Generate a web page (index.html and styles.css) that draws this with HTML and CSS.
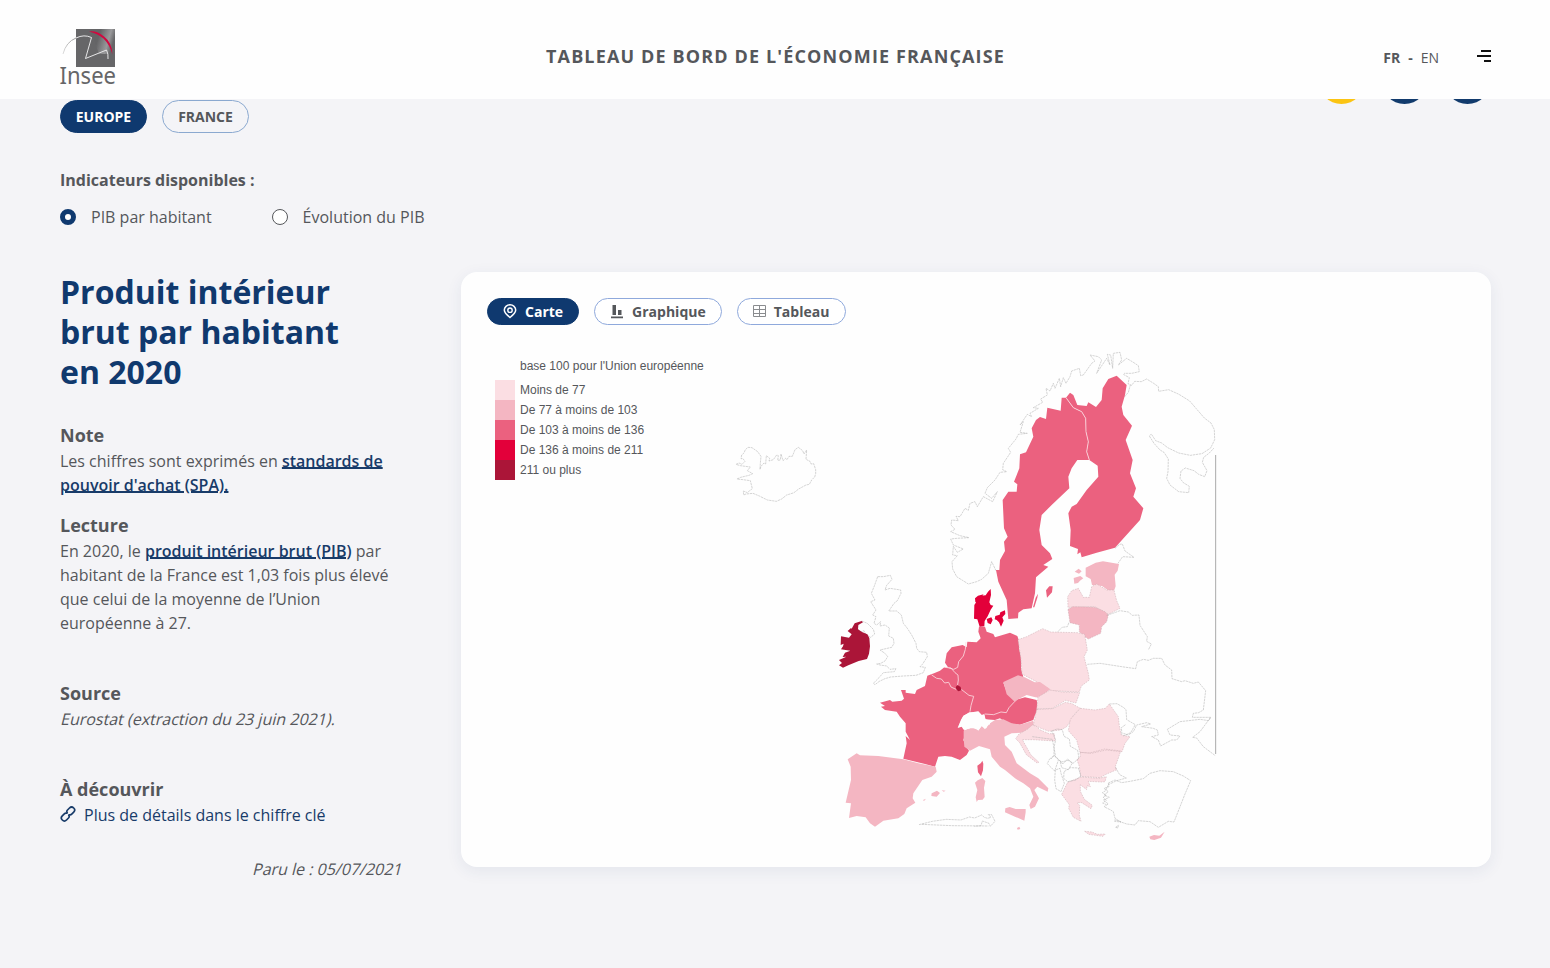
FILE: index.html
```html
<!DOCTYPE html>
<html lang="fr">
<head>
<meta charset="utf-8">
<title>Tableau de bord de l'économie française</title>
<link rel="stylesheet" href="styles.css">
</head>
<body>
<header class="header">
  <svg class="logo" width="60" height="62" viewBox="59 28 60 62" role="img" aria-label="Insee">
    <defs>
      <linearGradient id="shade" x1="0" y1="0" x2="1" y2="0.3"><stop offset="0.4" stop-color="#646466"/><stop offset="0.8" stop-color="#99999b"/><stop offset="1" stop-color="#666668"/></linearGradient>
      <linearGradient id="fade" x1="0" y1="1" x2="1" y2="0"><stop offset="0" stop-color="#ddd"/><stop offset="1" stop-color="#999"/></linearGradient>
    </defs>
    <path fill="#666668" d="M76 29h39v38H76z"/>
    <path fill="url(#shade)" d="M90 29h25v25H99z"/>
    <path fill="none" stroke="url(#fade)" d="M63 54q3-12 13-16"/>
    <path fill="none" stroke="#f4f4f5" stroke-width=".9" d="M76 38q8-4 15.500-.5L85.500 58.500l21-8.500q2 4 1.500 9"/>
    <path fill="#d3073f" d="M89 31.500q8-1 15 5 8 6 8.500 18-3-10-9-16-6-5-14.500-7"/>
    <text class="logo-text" x="59.500" y="83.500" textLength="56.500" lengthAdjust="spacingAndGlyphs">Insee</text>
  </svg>
  <h1 class="site-title">Tableau de bord de l'économie française</h1>
  <nav class="nav">
    <span class="lang"><b>FR</b><b class="dash">-</b><span>EN</span></span>
    <svg width="14" height="12" viewBox="0 0 14 12"><path d="M4 1h10M0 6h14M7 11h7" stroke="#111" stroke-width="1.800"/></svg>
  </nav>
</header>
<main class="main">
  <div class="top">
    <div class="pills"><button class="pill active">EUROPE</button><button class="pill">FRANCE</button></div>
    <div class="tools"><i class="tool yellow"></i><i class="tool"></i><i class="tool"></i></div>
  </div>
  <section class="indicators">
    <strong>Indicateurs disponibles :</strong>
    <div class="radios">
      <label class="radio"><i class="dot checked"></i>PIB par habitant</label>
      <label class="radio"><i class="dot"></i>Évolution du PIB</label>
    </div>
  </section>
  <div class="content">
    <aside class="aside">
      <h2>Produit intérieur<br>brut par habitant<br>en 2020</h2>
      <section><h3>Note</h3><p>Les chiffres sont exprimés en <a class="def">standards de<br>pouvoir d'achat (SPA).</a></p></section>
      <section class="close"><h3>Lecture</h3><p>En 2020, le <a class="def">produit intérieur brut (PIB)</a> par<br>habitant de la France est 1,03 fois plus élevé<br>que celui de la moyenne de l’Union<br>européenne à 27.</p></section>
      <section class="apart"><h3>Source</h3><p><em>Eurostat (extraction du 23 juin 2021).</em></p></section>
      <section class="apart"><h3>À découvrir</h3>
        <a class="more"><svg width="16" height="16" viewBox="0 0 16 16" fill="none" stroke="#183b69" stroke-width="1.700" stroke-linecap="round"><path d="M7.200 6.800q-1-1.500.3-2.800l2-2a2.900 2.900 0 0 1 4.200 4.200l-2 2q-1 1-2.200.6"/><path d="M8.800 9.200q1 1.500-.3 2.800l-2 2a2.900 2.900 0 0 1-4.200-4.200l2-2q1-1 2.200-.6"/></svg>Plus de détails dans le chiffre clé</a>
      </section>
      <p class="date"><em>Paru le : 05/07/2021</em></p>
    </aside>
    <article class="card">
      <div class="tabs">
        <button class="tab active"><svg width="14" height="16" viewBox="0 0 14 16" fill="none" stroke="#fff"><path stroke-width="1.500" d="M7 13.500Q1.300 9 1.300 6a5.700 5.200 0 0 1 11.400 0Q12.700 9 7 13.500z"/><circle cx="7" cy="6.200" r="2.200" stroke-width="1.400"/></svg>Carte</button>
        <button class="tab chart"><svg width="12" height="14" viewBox="0 0 12 14" fill="#55575b"><path d="M1.500 0h3.500v10H1.500zM7 5h3.500v5H7zM0 11.500h12v1.700H0z"/></svg>Graphique</button>
        <button class="tab table"><svg width="13" height="14" viewBox="0 0 13 14" fill="none" stroke="#8a8c8f"><path d="M.5.500h12v11H.5zM6.500.500v11M.5 4.500h12M.5 8.500h12"/></svg>Tableau</button>
      </div>
      <svg class="map" width="978" height="505" viewBox="487 340 978 505">
        <g class="legend">
          <text x="520" y="370">base 100 pour l'Union européenne</text>
          <path class="c1" d="M495 380h20v20h-20z"/><text x="520" y="394">Moins de 77</text>
          <path class="c2" d="M495 400h20v20h-20z"/><text x="520" y="414">De 77 à moins de 103</text>
          <path class="c3" d="M495 420h20v20h-20z"/><text x="520" y="434">De 103 à moins de 136</text>
          <path class="c4" d="M495 440h20v20h-20z"/><text x="520" y="454">De 136 à moins de 211</text>
          <path class="c5" d="M495 460h20v20h-20z"/><text x="520" y="474">211 ou plus</text>
        </g>
        <!-- Islande -->
        <g transform="translate(725 435) scale(.33333)">
          <path class="out" d="M105 103l3-9 9-10 5 3 2-25 10 8-2 8 13-4 10-14 5 2-2 14 8-1 2-18 6 20 8-7 4 4 6-10 10 0 8-20 10-7 13 10 4 10 8-12-2 28 12 6 3 8 8-1 6 18 0 12-3 10-9 9-7 13-10 2-22 12-14 11-12 4-10 3-15 12-16 7-27-4-24-12-19-8-21 2-7 3-1-12 12 5 7-6 8-6-6-24-22-3-18-2 11-5 25-6 11-5-16-9 9-11-30-4-13-4 9-4 9 4 9-9-6-8-6 0 2-11 7-6 4-10 8-7 12 1 17 12 10 14-2 20z"/>
        </g>
        <!-- Scandinavie -->
        <g transform="translate(940 345) scale(.33333)">
          <path class="out" d="M168 677L155 650 145 685 125 703 110 710 85 717 50 695 38 672 36 650 52 632 38 630 40 604 52 622 70 612 40 600 32 582 50 580 87 578 60 572 32 560 45 553 33 540 35 525 55 527 48 514 60 515 75 490 85 496 90 475 105 470 112 485 130 455 158 470 172 440 155 460 135 445 142 428 165 405 180 382 200 380 188 374 190 355 212 322 205 310 228 282 235 268 262 265 240 262 250 230 240 240 262 208 275 215 270 205 295 190 280 188 308 172 302 162 322 150 318 130 330 138 340 115 345 130 358 100 362 125 370 98 378 115 390 95 395 78 418 70 422 92 430 90 455 55 465 48 450 30 475 35 485 45 470 85 500 40 510 60 502 28 512 30 518 70 520 25 540 22 545 45 535 60 560 40 580 52 595 62 598 80 575 85 552 85"/>
          <path class="out" d="M550 88l18 10-4 18 11 5 9-12 20 1 16-8 21 13 14 10 1 14 30-5 31 14 32 20 19 22 25 29 20 15 10 20 1 30-12 25-26 17-35 5-35-7-33-16-18-14-18-7-13-20-6 6 14 22 18 20 12 7 13 20-1 38-4 20 10 20 26 20 30 3 2-19-18-11-10-13 3-22 13-9 26 8 14 11 18 7 7-18-14-25 4-15 17-13 14-15M553 156l12-14 6-22M525 610l14-12 8-1 8 21 27 19-34-2-14 20"/>
          <path class="edge" d="M827 330v897"/>
          <path class="c3" d="M378 158L365 158 362 197 322 188 318 222 300 216 288 225 275 250 280 275 258 322 240 328 238 370 222 410 232 418 230 440 205 440 188 465 192 550 203 575 192 590 195 618 180 645 178 675 168 675 175 710 200 765 205 822 234 820 235 803 250 793 275 790 285 745 288 697 325 665 310 660 337 642 330 625 305 600 298 555 305 510 335 480 388 430 385 395 395 370 412 345 448 345 440 320 445 290 438 260 437 220 425 200 400 188z"/>
          <path class="c3" d="M378 158L390 143 400 150 412 180 440 183 445 172 468 186 485 165 488 130 505 102 530 92 560 120 555 150 545 185 550 210 576 242 557 285 578 345 570 385 588 430 580 455 610 490 600 525 525 608 470 623 425 637 421 622 412 628 414 612 390 603 392 555 385 505 395 485 410 477 440 435 475 395 473 362 448 345 440 320 445 290 438 260 437 220 425 200 400 188z"/>
          <path class="seam" d="M378 158L400 188 425 200 437 220 438 260 445 290 440 320 448 345"/>
          <path class="c3" d="M338 724l-2 18-15 16-3-22 10-12zM294 746l-2 12-9 29-4 0 8-29z"/>
        </g>
        <!-- Europe de l'Ouest et du Sud -->
        <g transform="translate(835 660) scale(.33333)">
          <path class="c3" d="M277 47L297 40 315 32 328 22 340 23 330 8 335-20 350-38 383-45 395-38 397-55 425-53 437-65 430-85 432-100 450-100 455-85 475-78 480-68 525-82 547-72 553-55 552-35 560 0 558 25 565 50 505 68 515 95 540 120 570 112 605 120 610 148 600 165 595 180 555 194 515 190 495 175 480 180 450 178 448 162 440 165 430 155 415 157 403 157 385 168 370 200 385 198 388 210 390 225 385 240 395 262 402 272 395 285 375 300 350 290 330 288 310 290 300 320 270 312 205 296 215 250 212 228 225 240 212 215 212 190 195 170 185 155 150 150 138 140 150 138 135 128 165 120 172 125 200 122 207 116 198 90 212 90 212 98 240 102 245 90 270 78z"/>
          <path class="c2" d="M38 298L65 280 75 286 130 288 205 298 250 310 302 320 305 335 290 350 262 360 235 400 233 415 241 428 215 445 208 462 190 475 145 482 120 500 105 490 92 472 65 468 42 474 48 430 32 428 48 360 47 320z"/>
          <path class="c2" d="M386 212L402 205 415 205 430 210 440 198 450 208 465 190 480 180 505 178 530 190 555 194 595 182 598 215 560 218 530 220 508 230 510 255 530 275 545 310 585 340 610 355 640 385 638 395 607 380 598 390 612 415 600 440 587 447 583 435 595 410 585 385 565 370 540 355 510 330 495 320 470 290 465 268 432 258 405 272 388 260 386 235zM511 445l13-4 18 6 30 0 0 10-4 25-28-12-30-13zM420 368l8-7 14-7 9 9-4 20 2 28-6 8-14 1-4 6-3-14 5-22zM290 400l16-8 9 7-10 11-16-2zM264 420l9-4-6 7zM320 391l12 1-6 3zM546 504l7-4 3 7-8 2z"/>
          <path class="c3" d="M442 302l3 9-1 20-6 18-9-12-2-20 11-8z"/>
          <path class="white" d="M368 204L378 179 385 167 402 159 415 156 430 154 440 165 448 165 452 178 467 182 464 194 454 190 455 205 440 198 430 212 416 198 403 206 386 209 380 200z"/>
          <path class="seam" d="M290 45l15 10 14 2 10 12 12-2 7 14 17 8 15 0 22 17 14 3-8 28-3 18M328 22l20 2 12 14 9 7 1 15-3 20M340 23l16 5 12-6 3-17 14-17 6-20 2-22M449 162l27 2 22-8 16 2 8-15 13-14 8-8"/>
          <path class="c5" d="M362 82l5-7 10 6 2 10-8 3-6-4z"/>
          <path class="out" d="M252 494l40-10 42-6 44 2 25-9 16 3 21-9 8 7 10 3 10-3-8-8 10 0 10 20-14 15-4-9-20-7-4 14-20 2M260 493l90 4 110 1"/>
        </g>
        <!-- Pays baltes et Danemark -->
        <g transform="translate(940 480) scale(.33333)">
          <path class="c2" d="M437 263l30-15 22-4 48 8-4 20-9 12 3 35-5 13-19-2-17-12-30-3-4-18-15-8zM404 275l8-6 4-3 9 8-8 7zM401 294l20-6 9 7-10 7-6 7-11 2z"/>
          <path class="c1 line" d="M384 382L383 350 395 332 415 325 430 352 448 352 455 320 470 312 500 330 522 330 530 362 540 385 505 403 465 380z"/>
          <path class="c2 line" d="M384 388L398 380 440 381 465 382 495 395 505 405 500 425 485 440 482 460 445 477 428 465 418 455 418 435 390 428z"/>
          <path class="out" d="M500 406L524 398 540 392 565 396 577 406 597 405 600 436 622 470 620 484 634 492 625 510M350 459l16-17 16-2 6-15"/>
          <path class="c4" d="M152 327l1 18-5 22 4 8 8 2-8 12-9 20-9 14-1 16-14 1-7-22-10-2 1-41 10-15 10-13 14-1 7-11zM106 366l-1-11 9-8 17-4-10 10-11 15zM140 417l14-5 4 8-6 13-9-4zM166 408l13-4 2-7 14-6 1 11-9 10 4 10-8 18-6-13-7-7-6-2z"/>
        </g>
        <!-- Îles Britanniques -->
        <g transform="translate(830 560) scale(.33333)">
          <path class="out" d="M143 50L160 50 181 46 186 58 170 76 165 90 180 85 212 90 213 100 202 122 192 130 180 148 176 153 200 153 214 165 220 190 232 205 245 225 258 250 260 265 268 275 290 277 292 290 278 312 270 320 286 322 280 338 258 346 220 348 182 351 165 356 148 364 135 374 130 370 148 352 160 338 193 335 198 326 180 328 170 318 150 315 140 312 152 310 165 303 173 290 165 280 150 270 185 262 192 250 190 235 176 228 178 204 165 195 150 198 152 185 140 195 132 190 138 170 128 165 138 150 122 125 135 120 124 100 133 78zM95 183L112 190 130 208 134 222 122 232 107 222 102 212 91 216 82 207"/>
          <path class="c5" d="M65 206l9-16 21-7 4 4-14 8-1 13 12 8 16 7 6 11 2 25-3 22-6 16-25 6-31 13-16 7-12-7 9-7-9-9 22-10-11 1 7-13 16-6-28-4 6-9 2-8-9 4 1-26 24 4 8-10-12-10 10-9z"/>
        </g>
        <!-- Europe centrale et orientale -->
        <g transform="translate(1000 620) scale(.33333)">
          <path class="c1 line" d="M54 59L80 50 100 40 128 26 152 36 232 38 254 43 262 90 252 110 265 160 268 180 244 198 238 216 152 212 134 198 104 182 66 162 62 110z"/>
          <path class="c2" d="M10 186l44-20 20 6 30 15 16-1 30 21-26 26-18-1-26-7-24 12-12 8-24-22z"/>
          <path class="c1 line" d="M150 210l36 6 53 2-11 31-32-8-38 24-48 2 4-36zM110 268l48-2 38-19 20 4 25 14-20 20-11 20-11 16-18 9-34 4-24-9-23-10 4-17z"/>
          <path class="c1 line" d="M82 328l15-13 12 4 10 10 28 12 16 0 2 22-66-4-32 0 26 46 24 22-6 2-32-25-20-36-12-12 10-14z"/>
          <path class="c1 line" d="M241 265L285 270 316 265 328 252 355 290 358 318 364 345 390 350 375 370 366 395 318 390 274 400 240 397 230 360 205 332 211 298zM240 397L268 399 314 387 362 393 354 417 346 439 350 449 318 463 300 473 242 469 238 439 231 419 241 409z"/>
          <path class="c1 line" d="M185 523L203 487 243 471 297 475 319 470 315 485 305 486 265 484 271 500 261 497 260 509 241 494 241 514 253 538 277 556 273 566 245 548 231 548 239 556 238 586 243 604 220 592 206 565 208 554zM254 634l22 2 16 7 24-1-7 7-43-6z"/>
          <path class="c2" d="M448 650l14-5 16 2 16-12-11 18-20 7-12-2z"/>
          <path class="out" d="M262 133L300 130 365 140 407 146 412 125 430 118 445 121 460 115 485 115 495 135 515 150 516 176 545 185 555 182 580 190 595 186 617 212 610 270 596 278 580 280 577 292 632 292 626 302 600 298 540 305 502 328 510 345 540 348 530 360 515 360 482 378 475 360 455 350 475 345 472 330 460 325 425 320 452 312 440 308 410 315 400 335 385 345 370 340M632 292L600 335 578 352 590 354 610 380 646 407"/>
          <path class="out" d="M328 252l23-1 19 11 8 7 2 30 26 15-14 24-22 10M366 343l-2-20 14-10M97 350l60 8 5 25 0 25-10 10M155 333l16-6 16 2 5 20 16 8 3 22 22 12 4 24-18 15-15-9-20 5-17-14-5-30 5-22z"/>
          <path class="out" d="M148 418l14-12 14 12-12 35-22-22zM180 422l8 10 15-15 14 12-12 20-20-6zM166 450l-2 30 4 26 15 9 10-25-10-30-3-15zM192 455l20-12 23 1 8 24-16 12-24 5-12-10zM346 442l13 22 20 10-29 8-25 12-8 18-10 6 12 8-10 5 10 10-11 8 11 5"/>
          <path class="out" d="M325 489L345 480 365 488 390 484 430 476 450 460 480 452 520 455 550 468 572 482 555 522 522 606 505 604 475 622 450 605 415 602 405 615 380 612 360 605 345 595 340 575 332 570 312 560 325 552 310 540 328 532 312 525 325 515 312 505 327 500zM343 600l12 2 8 4-20-2M347 622l8-6-1 8z"/>
        </g>
      </svg>
    </article>
  </div>
</main>
</body>
</html>
```
FILE: styles.css
```css
* { box-sizing: border-box; }
body { margin: 0; height: 968px; overflow: hidden; background: #f4f4f7; color: #55575b; font: 16px/24px "Open Sans", sans-serif; }
h1, h2, h3, p { margin: 0; }
button { font-family: inherit; color: inherit; background: #fff; padding: 0; }
.header { position: fixed; top: 0; left: 0; width: 100%; height: 99px; padding: 0 59px; display: grid; grid-template-columns: 1fr auto 1fr; align-items: center; background: #fefefe; z-index: 2; }
.logo { margin-top: 19px; }
.logo-text { font: 23px "Noto Sans", sans-serif; fill: #666668; }
.site-title { margin-top: 13px; padding-left: 1px; font-size: 18px; line-height: 24px; font-weight: 700; letter-spacing: 1.14px; text-transform: uppercase; }
.nav { display: flex; justify-content: flex-end; align-items: center; margin-top: 14px; gap: 38px; font-size: 14px; }
.nav svg { margin-bottom: 1px; }
.lang { display: flex; gap: 8px; padding-top: 3px; }
.main { padding: 57px 59px 0 60px; }
.top { display: flex; justify-content: space-between; align-items: flex-start; height: 76px; }
.pills { display: flex; gap: 15px; padding-top: 43px; }
.pill { width: 87px; height: 33px; border: 1px solid #8ba9d0; border-radius: 17px; font-size: 14px; font-weight: 700; background: transparent; }
.pill.active, .tab.active { background: #0f396f; border-color: #0f396f; color: #fff; }
.tools { display: flex; gap: 16px; padding-right: .5px; }
.tool { width: 47px; height: 47px; border-radius: 50%; background: #123b6d; }
.tool.yellow { background: #fbc413; }
.indicators { padding-top: 35px; height: 139px; }
.indicators strong { display: block; }
.radios { display: flex; gap: 60px; padding-top: 13px; }
.radio { display: flex; align-items: center; gap: 15px; }
.dot { width: 16px; height: 16px; border: 1px solid #55575b; border-radius: 50%; background: #fff; }
.dot.checked { border: 5px solid #0f396f; }
.content { display: grid; grid-template-columns: 341px 1030px; gap: 60px; align-items: start; }
.aside { white-space: nowrap; }
h2 { font-size: 32px; line-height: 40px; font-weight: 700; color: #10396e; margin-bottom: 29px; }
h3 { font-size: 18px; line-height: 28px; font-weight: 700; }
em { display: inline-block; font-style: normal; transform: translateX(1.5px) skewX(-14deg); }
.close { margin-top: 14px; }
.apart { margin-top: 44px; }
.def { color: #183b69; font-weight: 600; text-decoration: underline; text-decoration-thickness: 2px; text-underline-offset: 0; }
.more { display: flex; align-items: center; gap: 8px; color: #183b69; }
.more svg { margin-top: -2px; }
.date { margin-top: 30px; text-align: right; }
.card { height: 595px; padding: 26px; background: #fefefe; border-radius: 16px; box-shadow: 0 4px 16px rgba(40, 60, 110, .08); }
.tabs { display: flex; gap: 15px; margin-bottom: 15px; }
.tab { height: 27px; display: flex; align-items: center; justify-content: center; gap: 8px; border: 1px solid #8fa9dc; border-radius: 14px; padding: 0 15px; font-size: 14px; line-height: 20px; font-weight: 700; }
.tab.chart { gap: 9px; padding-left: 16px; }
.tab.table { padding-right: 16px; }
.map { display: block; }
.legend text { font: 12px "Liberation Sans", sans-serif; fill: #55575b; }
.c1 { fill: #fbdee3; }
.c2 { fill: #f4b6c2; }
.c3 { fill: #eb617f; }
.c4 { fill: #e3003a; }
.c5 { fill: #ab1538; }
.white { fill: #fefefe; }
.out, .line { stroke-width: 1.500; stroke-linejoin: round; }
.out { fill: none; stroke: #aaa; stroke-dasharray: 7 2; }
.line { stroke: #c9aab0; stroke-dasharray: 5 3; }
.edge { fill: none; stroke: #aaa; stroke-width: 3; }
.seam { fill: none; stroke: #fbdce2; stroke-width: 2.500; }
```
